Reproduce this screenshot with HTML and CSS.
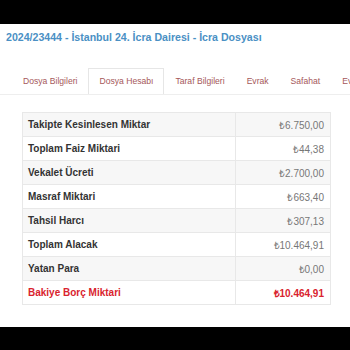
FILE: index.html
```html
<!DOCTYPE html>
<html lang="tr">
<head>
    <meta charset="UTF-8">
    <meta name="viewport" content="width=device-width, initial-scale=1.0">
    <title>İcra Dosyası</title>
    <link rel="stylesheet" href="styles.css">
</head>
<body>

    <!-- Top bar -->
    <div class="bar"></div>

    <!-- File title -->
    <h1 class="file-title">2024/23444 - İstanbul 24. İcra Dairesi - İcra Dosyası</h1>

    <!-- Tabs -->
    <ul class="tabs">
        <li><a href="#">Dosya Bilgileri</a></li>
        <li class="active"><a href="#">Dosya Hesabı</a></li>
        <li><a href="#">Taraf Bilgileri</a></li>
        <li><a href="#">Evrak</a></li>
        <li><a href="#">Safahat</a></li>
        <li><a href="#">Evrak</a></li>
    </ul>

    <!-- Account table -->
    <table class="account">
        <tr><th>Takipte Kesinlesen Miktar</th><td>₺6.750,00</td></tr>
        <tr><th>Toplam Faiz Miktari</th><td>₺44,38</td></tr>
        <tr><th>Vekalet Ücreti</th><td>₺2.700,00</td></tr>
        <tr><th>Masraf Miktari</th><td>₺663,40</td></tr>
        <tr><th>Tahsil Harcı</th><td>₺307,13</td></tr>
        <tr><th>Toplam Alacak</th><td>₺10.464,91</td></tr>
        <tr><th>Yatan Para</th><td>₺0,00</td></tr>
        <tr class="total"><th>Bakiye Borç Miktari</th><td>₺10.464,91</td></tr>
    </table>

    <div class="bar bottom"></div>

</body>
</html>
```

FILE: styles.css
```css
/* General */
* {
    margin: 0;
    padding: 0;
    box-sizing: border-box;
}

body {
    font-family: "Liberation Sans", Arial, sans-serif;
    background-color: #fff;
    width: 350px;
    height: 350px;
    overflow: hidden;
    display: flex;
    flex-direction: column;
}

.bar {
    height: 24px;
    background-color: #000;
    flex-shrink: 0;
}

.bar.bottom {
    height: 23px;
    margin-top: auto;
}

/* Title */
.file-title {
    font-size: 10.6px;
    font-weight: bold;
    color: #4a90c4;
    padding: 6px 0 0 6px;
    line-height: 14px;
    white-space: nowrap;
}

/* Tabs */
.tabs {
    list-style: none;
    display: flex;
    margin-top: 24px;
    padding-left: 12px;
    border-bottom: 1px solid #eee;
    white-space: nowrap;
    overflow: hidden;
}

.tabs li {
    border: 1px solid transparent;
    border-bottom: none;
    margin-bottom: -1px;
    flex-shrink: 0;
}

.tabs a {
    display: block;
    padding: 0 10px;
    line-height: 25px;
    font-size: 8.6px;
    color: #a5585a;
    text-decoration: none;
}

.tabs li.active {
    border-color: #e6e6e6;
    background-color: #fff;
    border-bottom: 1px solid #fff;
}

/* Table */
.account {
    margin: 17px 0 0 22px;
    width: 309px;
    border-collapse: collapse;
    font-size: 10px;
}

.account th,
.account td {
    height: 24px;
    border: 1px solid #e8e8e8;
    padding: 0 6px 0 5px;
}

.account th {
    width: 213px;
    text-align: left;
    color: #333;
}

.account td {
    text-align: right;
    color: #777;
}

.account tr:nth-child(odd) {
    background-color: #f7f7f7;
}

.account .total th,
.account .total td {
    color: #d9232e;
    font-weight: bold;
}
```
